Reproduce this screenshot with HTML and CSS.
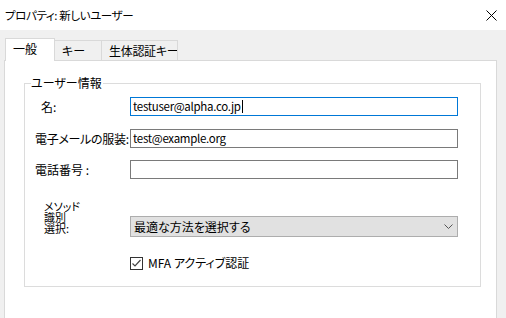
FILE: index.html
```html
<!DOCTYPE html>
<html lang="ja">
<head>
    <meta charset="UTF-8">
    <meta name="viewport" content="width=device-width, initial-scale=1.0">
    <title>プロパティ: 新しいユーザー</title>
    <link rel="stylesheet" href="styles.css">
</head>
<body>
    <div class="window">
        <div class="titlebar">
            <span class="title">プロパティ: 新しいユーザー</span>
            <span class="close">
                <svg width="11" height="11" viewBox="0 0 11 11">
                    <path d="M0.5 0.5 L10.5 10.5 M10.5 0.5 L0.5 10.5" stroke="#000" stroke-width="1" fill="none"/>
                </svg>
            </span>
        </div>

        <div class="tabs">
            <div class="tab tab-general active">一般</div>
            <div class="tab tab-key">キー</div>
            <div class="tab tab-bio">生体認証キー</div>
        </div>

        <div class="panel">
            <fieldset class="group">
                <legend>ユーザー情報</legend>

                <div class="row row-name">
                    <label class="lbl lbl-name">名:</label>
                    <div class="field focused">testuser@alpha.co.jp<span class="caret"></span></div>
                </div>

                <div class="row row-mail">
                    <label class="lbl lbl-mail">電子メールの服装:</label>
                    <div class="field">test@example.org</div>
                </div>

                <div class="row row-phone">
                    <label class="lbl">電話番号 :</label>
                    <div class="field"></div>
                </div>

                <div class="row row-method">
                    <label class="lbl lbl-method">メソッド<br>識別<br>選択:</label>
                    <div class="select">
                        <span>最適な方法を選択する</span>
                        <svg width="9" height="5" viewBox="0 0 9 5">
                            <path d="M0.5 0.5 L4.5 4.5 L8.5 0.5" stroke="#555" stroke-width="1" fill="none"/>
                        </svg>
                    </div>
                </div>

                <div class="row row-check">
                    <span class="checkbox">
                        <svg width="11" height="11" viewBox="0 0 11 11">
                            <path d="M1.5 5.5 L4 8 L9.5 2" stroke="#444" stroke-width="1.2" fill="none"/>
                        </svg>
                    </span>
                    <span class="check-text">MFA アクティブ認証</span>
                </div>
            </fieldset>
        </div>
    </div>
</body>
</html>
```

FILE: styles.css
```css
html, body {
    margin: 0;
    height: 100%;
    overflow: hidden;
}

body {
    font-family: "Noto Sans CJK JP", sans-serif;
    font-feature-settings: "palt";
    font-size: 12px;
    color: #000;
    background-color: #f0f0f0;
}

.window {
    display: flex;
    flex-direction: column;
    height: 100%;
}

.titlebar {
    display: flex;
    align-items: center;
    justify-content: space-between;
    height: 30px;
    padding: 0 9px 1px 5px;
    box-sizing: border-box;
    background-color: #fff;
}

.title {
    font-size: 11.5px;
    letter-spacing: -0.4px;
    line-height: 16px;
}

.close {
    display: flex;
    margin-top: 1px;
}

.tabs {
    display: flex;
    align-items: flex-end;
    height: 30px;
    padding-left: 5px;
    box-sizing: border-box;
}

.tab {
    height: 19px;
    line-height: 19px;
    padding-left: 7px;
    white-space: nowrap;
    overflow: hidden;
    border: 1px solid #d9d9d9;
    border-bottom: none;
    background-color: #f0f0f0;
    margin-left: -1px;
}

.tab.active {
    height: 22px;
    line-height: 20px;
    margin-left: 0;
    margin-bottom: -1px;
    background-color: #fff;
    position: relative;
    z-index: 1;
}

.tab-general {
    width: 41px;
}

.tab-key {
    width: 39px;
}

.tab-bio {
    width: 68px;
    letter-spacing: -0.3px;
}

.panel {
    flex: 1;
    margin-left: 4px;
    width: 491px;
    border: 1px solid #d9d9d9;
    border-bottom: none;
    background-color: #fff;
}

.group {
    margin: 14px 0 0 19px;
    width: 457px;
    padding: 0 0 15px 10px;
    box-sizing: border-box;
    border: 1px solid #dcdcdc;
}

.group legend {
    margin-left: -4px;
    padding: 0 1px 0 0;
    line-height: 16px;
}

.row {
    display: flex;
    align-items: center;
}

.row-name {
    margin-top: 6px;
}

.row-mail {
    margin-top: 13px;
}

.row-phone {
    margin-top: 12px;
}

.row-method {
    margin-top: 22px;
    align-items: flex-end;
}

.row-check {
    margin-top: 18px;
    padding-left: 95px;
}

.lbl {
    width: 95px;
    flex-shrink: 0;
    white-space: nowrap;
    line-height: 16px;
}

.lbl-name {
    padding-left: 6px;
    box-sizing: border-box;
}

.lbl-mail {
    letter-spacing: -0.3px;
}

.lbl-method {
    padding-left: 9px;
    box-sizing: border-box;
    font-size: 11px;
    line-height: 11px;
    margin-bottom: 3px;
}

.field {
    width: 328px;
    height: 19px;
    box-sizing: border-box;
    border: 1px solid #7a7a7a;
    padding-left: 2px;
    font-size: 11.5px;
    letter-spacing: -0.3px;
    line-height: 17px;
    white-space: nowrap;
}

.field.focused {
    border-color: #0078d7;
}

.caret {
    display: inline-block;
    width: 1px;
    height: 13px;
    margin-left: 1px;
    vertical-align: -2px;
    background-color: #000;
}

.select {
    display: flex;
    align-items: center;
    justify-content: space-between;
    width: 328px;
    height: 21px;
    box-sizing: border-box;
    border: 1px solid #adadad;
    background-color: #e1e1e1;
    padding: 0 4px 0 3px;
    line-height: 19px;
}

.checkbox {
    display: flex;
    align-items: center;
    justify-content: center;
    width: 13px;
    height: 13px;
    box-sizing: border-box;
    border: 1px solid #333;
    background-color: #fff;
}

.check-text {
    margin-left: 5px;
    line-height: 16px;
}
```
